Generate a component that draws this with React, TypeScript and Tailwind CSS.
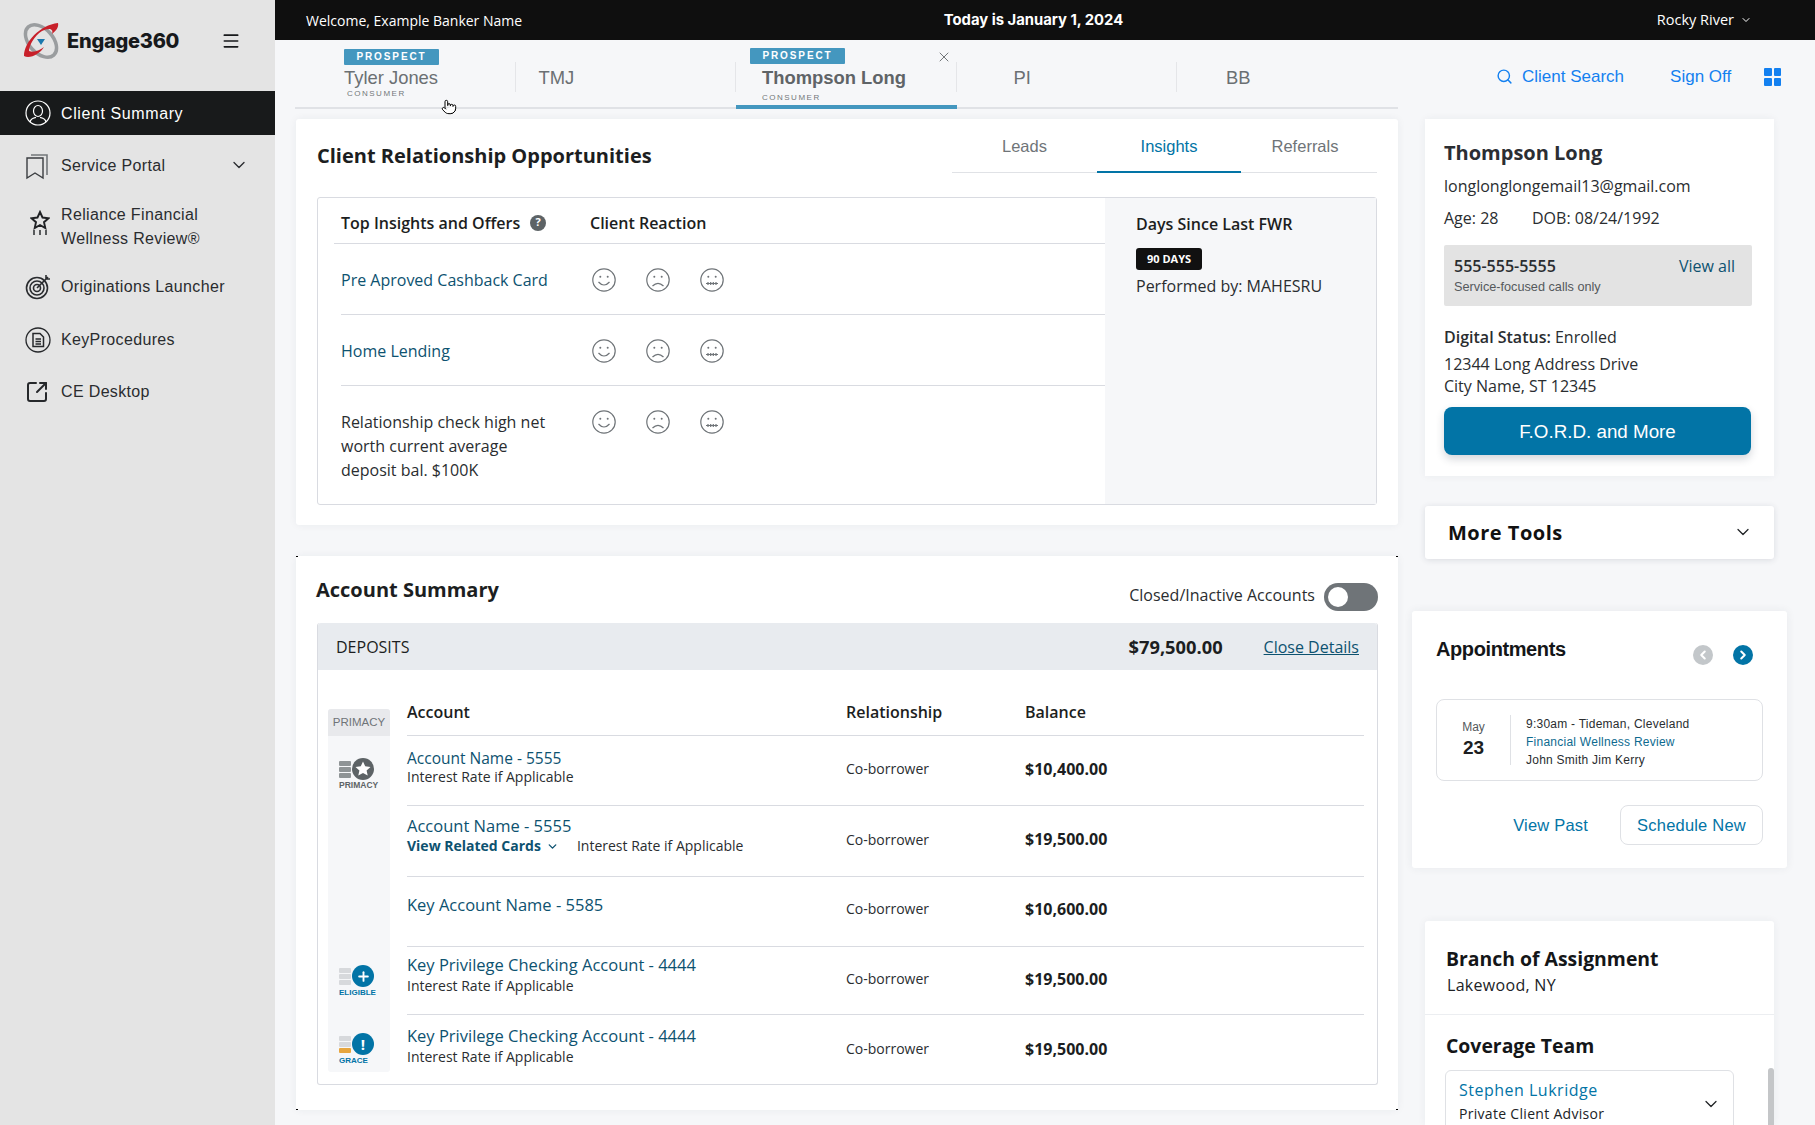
import React from 'react';
import { ChevronDown, ChevronLeft, ChevronRight, Menu, Plus, Pointer, Search, SquareArrowOutUpRight, X } from 'lucide-react';

const Logo = () => (
  <svg width="38" height="38" viewBox="0 0 38 38" fill="none">
    <ellipse cx="19" cy="19" rx="19" ry="12" transform="rotate(48 19 19)" stroke="#9a9d9f" strokeWidth="3.5" />
    <path d="M2 34 C2 20 18 3 36 1 C37 5 34 9 30 12 C32 6 26 6 20 9 C12 14 7 24 7 29 C12 31 18 28 22 25 C18 32 8 37 2 34Z" fill="#c8202a" />
    <path d="M15 17 L23 17 L19 23Z" fill="#1b78ad" />
  </svg>
);

const UserIcon = () => (
  <svg width="26" height="26" viewBox="0 0 26 26" fill="none" stroke="#fff" strokeWidth="1.2">
    <circle cx="13" cy="13" r="12" />
    <ellipse cx="13" cy="11" rx="4.5" ry="5.5" />
    <path d="M5 22 C6 18 9 18 11 17.5 M21 22 C20 18 17 18 15 17.5" />
  </svg>
);

const PortalIcon = () => (
  <svg width="24" height="27" viewBox="0 0 24 27" fill="none" stroke="#3a3d40" strokeWidth="1.4">
    <path d="M2 5 H18 V25 L10 20 L2 25Z" />
    <path d="M6 2 H22 V22" stroke="#73777a" strokeWidth="1.6" />
  </svg>
);

const StarIcon = () => (
  <svg width="20" height="26" viewBox="0 0 20 26" fill="none" stroke="#1f2124" strokeWidth="1.9">
    <path d="M10 2 L12.5 7.5 L18.5 8.2 L14 12.2 L15.3 18 L10 15 L4.7 18 L6 12.2 L1.5 8.2 L7.5 7.5Z" />
    <path d="M4 20 V25 M10 20 V25 M16 20 V25" strokeWidth="1.4" />
  </svg>
);

const TargetIcon = () => (
  <svg width="26" height="26" viewBox="0 0 26 26" fill="none" stroke="#2a2c2f" strokeWidth="1.6">
    <circle cx="12" cy="14" r="10.5" />
    <circle cx="12" cy="14" r="7" />
    <circle cx="12" cy="14" r="3.5" />
    <path d="M12 14 L23 3 M21 1 L21 5 L25 5" />
  </svg>
);

const DocIcon = () => (
  <svg width="26" height="26" viewBox="0 0 26 26" fill="none" stroke="#26282b" strokeWidth="1.3">
    <circle cx="13" cy="13" r="12" />
    <path d="M8 6.5 H15 L18.5 10 V19.5 H8Z" strokeWidth="1.5" />
    <path d="M10.5 12 H16 M10.5 14.5 H16 M10.5 17 H16" />
  </svg>
);

const Face = ({ mouth }: { mouth: string }) => (
  <svg width="24" height="24" viewBox="0 0 24 24" fill="none" stroke="#6f7478" strokeWidth="1.2">
    <circle cx="12" cy="12" r="11.2" />
    <circle cx="8.3" cy="8.8" r="1" fill="#6f7478" stroke="none" />
    <circle cx="15.7" cy="8.8" r="1" fill="#6f7478" stroke="none" />
    <path d={mouth} />
  </svg>
);

const faces = [
  'M6.5 14 Q12 20 17.5 14',
  'M6.5 18 Q12 12.5 17.5 18',
  'M6 15.5 H18 M8 14 V17 M10.7 14 V17 M13.3 14 V17 M16 14 V17',
];

const Stripes = ({ colors }: { colors: string[] }) => (
  <div className="flex flex-col gap-[1px] w-[12px]">
    {colors.map((c, i) => (
      <div key={i} className={`h-[5px] rounded-[1px] ${c}`} />
    ))}
  </div>
);

const StatusBadge = ({ kind }: { kind: string }) => {
  if (kind === 'primacy') {
    return (
      <div className="ml-[11px]">
        <div className="flex items-center gap-[1px]">
          <Stripes colors={['bg-[#8f9496]', 'bg-[#8f9496]', 'bg-[#8f9496]']} />
          <svg width="22" height="22" viewBox="0 0 22 22">
            <circle cx="11" cy="11" r="11" fill="#5d6366" />
            <path d="M11 3.5 L13.2 8.3 L18.5 8.9 L14.6 12.4 L15.7 17.6 L11 15 L6.3 17.6 L7.4 12.4 L3.5 8.9 L8.8 8.3Z" fill="#fff" />
          </svg>
        </div>
        <div className="text-[8.5px] leading-[10px] font-bold text-[#5d6366] font-['Liberation_Sans',sans-serif]">PRIMACY</div>
      </div>
    );
  }
  const isGrace = kind === 'grace';
  return (
    <div className="ml-[11px]">
      <div className="flex items-center gap-[1px]">
        <Stripes colors={isGrace ? ['bg-[#d7d9dc]', 'bg-[#d7d9dc]', 'bg-[#e7a63f]'] : ['bg-[#d7d9dc]', 'bg-[#d7d9dc]', 'bg-[#d7d9dc]']} />
        <div className="w-[22px] h-[22px] rounded-full bg-[#0274a6] flex items-center justify-center text-white">
          {isGrace ? <span className="text-[15px] leading-none font-bold">!</span> : <Plus size={15} strokeWidth={3} />}
        </div>
      </div>
      <div className="mt-[1px] text-[8px] leading-[10px] font-bold text-[#0274a6] font-['Liberation_Sans',sans-serif]">{isGrace ? 'GRACE' : 'ELIGIBLE'}</div>
    </div>
  );
};

const NavItem = ({ icon, children, className }: { icon: React.ReactNode; children: React.ReactNode; className: string }) => (
  <div className={`flex items-center pl-[25px] text-[#2a2c2f] ${className}`}>
    <div className="w-[36px] flex shrink-0">{icon}</div>
    <div>{children}</div>
  </div>
);

const insightRows = [
  { label: 'Pre Aproved Cashback Card', link: true, h: 'h-[71px]' },
  { label: 'Home Lending', link: true, h: 'h-[71px]' },
  { label: 'Relationship check high net worth current average deposit bal. $100K', link: false, h: 'h-[119px]' },
];

const accounts = [
  { h: 'h-[70px]', pt: 'pt-[12px]', subMt: 'mt-0', balPb: 'pb-[4px]', name: 'Account Name - 5555', nameCls: 'text-[15.5px] font-normal', sub: 'Interest Rate if Applicable', bal: '$10,400.00', badge: 'primacy', badgePt: 'pt-[22px]' },
  { h: 'h-[71px]', pt: 'pt-[10px]', subMt: 'mt-[1px]', balPb: 'pb-[4px]', name: 'Account Name - 5555', nameCls: 'text-[16.5px] font-medium', related: true, sub: 'Interest Rate if Applicable', bal: '$19,500.00', badge: '', badgePt: '' },
  { h: 'h-[70px]', pt: 'pt-[18px]', subMt: 'mt-0', balPb: 'pb-[6px]', name: 'Key Account Name - 5585', nameCls: 'text-[16.5px] font-medium', sub: '', bal: '$10,600.00', badge: '', badgePt: '' },
  { h: 'h-[68px]', pt: 'pt-[8px]', subMt: 'mt-[2px]', balPb: 'pb-[4px]', name: 'Key Privilege Checking Account - 4444', nameCls: 'text-[16.5px] font-medium', sub: 'Interest Rate if Applicable', bal: '$19,500.00', badge: 'eligible', badgePt: 'pt-[18px]' },
  { h: 'h-[71px]', pt: 'pt-[11px]', subMt: 'mt-[2px]', balPb: 'pb-[4px]', name: 'Key Privilege Checking Account - 4444', nameCls: 'text-[16.5px] font-medium', sub: 'Interest Rate if Applicable', bal: '$19,500.00', badge: 'grace', badgePt: 'pt-[18px]' },
];

const clientTabs = [
  { label: 'Tyler Jones', short: false },
  { label: 'TMJ', short: true },
  { label: 'Thompson Long', short: false, active: true },
  { label: 'PI', short: true },
  { label: 'BB', short: true },
];

const insightTabs = [
  { label: 'Leads', w: 'w-[145px]', extra: '' },
  { label: 'Insights', w: 'w-[144px]', extra: '' },
  { label: 'Referrals', w: 'w-[136px]', extra: 'pr-[8px]' },
];

export default function App() {
  return (
    <div className="flex w-[1815px] h-[1125px] overflow-hidden bg-[#f6f7f9] font-['Open_Sans',sans-serif] text-[#202326]">
      {/* sidebar */}
      <aside className="w-[275px] shrink-0 bg-[#e4e4e4] font-['Liberation_Sans',sans-serif] text-[16px] tracking-[0.35px]">
        <div className="h-[91px] flex items-center pl-[22px] pb-[9px]">
          <Logo />
          <span className="ml-[7px] text-[20px] font-extrabold tracking-[-0.25px] text-[#17191b] font-['Inter',sans-serif]">Engage360</span>
          <Menu size={20} className="ml-[42px] text-[#17191b]" />
        </div>
        <div className="h-[44px] bg-[#181a1b] text-white flex items-center pl-[25px]">
          <div className="w-[36px] flex shrink-0"><UserIcon /></div>
          <span className="pt-[2px] tracking-[0.6px]">Client Summary</span>
        </div>
        <div className="relative">
          <NavItem icon={<PortalIcon />} className="h-[52px] pt-[10px]">Service Portal</NavItem>
          <ChevronDown size={20} strokeWidth={1.6} className="absolute right-[26px] top-[20px] text-[#2a2c2f]" />
        </div>
        <NavItem icon={<div className="pl-[5px] pb-[8px]"><StarIcon /></div>} className="h-[48px] mt-[16px] leading-[24px]">
          Reliance Financial<br />Wellness Review®
        </NavItem>
        <NavItem icon={<TargetIcon />} className="h-[26px] mt-[23px]">Originations Launcher</NavItem>
        <NavItem icon={<DocIcon />} className="h-[26px] mt-[27px]">KeyProcedures</NavItem>
        <NavItem icon={<SquareArrowOutUpRight size={24} strokeWidth={2} className="text-[#26282b]" />} className="h-[26px] mt-[26px]">CE Desktop</NavItem>
      </aside>

      <div className="flex-1 min-w-0 flex flex-col relative">
        {/* top bar */}
        <header className="h-[40px] shrink-0 bg-[#0f0f0f] text-white flex items-center justify-between pl-[31px] pr-[63px] text-[14px]">
          <span className="w-[300px]">Welcome, Example Banker Name</span>
          <span className="font-bold text-[14.8px] font-['Inter',sans-serif] ml-[9px]">Today is January 1, 2024</span>
          <span className="w-[300px] flex items-center justify-end gap-[6px] text-[14.5px]">
            Rocky River <ChevronDown size={12} />
          </span>
        </header>

        {/* client tabs */}
        <div className="h-[69px] shrink-0 flex font-['Liberation_Sans',sans-serif]">
          <div className="ml-[20px] w-[1103px] flex border-b-2 border-[#e0e2e6]">
            {clientTabs.map((t, i) => (
              <div key={t.label} className={`relative w-[220.5px] h-[67px] ${i < 4 ? 'after:absolute after:right-0 after:top-[22px] after:h-[30px] after:w-px after:bg-[#e5e6e9]' : ''}`}>
                {t.short && (
                  <span className={`absolute top-[28px] text-[18.4px] leading-[20px] text-[#6b7073] ${i === 1 ? 'left-[23px]' : i === 3 ? 'left-[57px]' : 'left-[49px]'}`}>{t.label}</span>
                )}
                {!t.short && (
                  <>
                    <span className={`absolute bg-[#4497bf] text-white text-[10px] leading-[16px] font-bold tracking-[1.9px] h-[16px] w-[95px] text-center rounded-[1px] ${t.active ? 'left-[14px] top-[8px]' : 'left-[49px] top-[9px]'}`}>PROSPECT</span>
                    <span className={`absolute top-[28px] text-[18.4px] leading-[20px] whitespace-nowrap ${t.active ? 'left-[26px] font-bold text-[#5f6467]' : 'left-[49px] text-[#6b7073]'}`}>{t.label}</span>
                    <span className={`absolute text-[8px] leading-[10px] tracking-[1.5px] text-[#73777a] ${t.active ? 'left-[26px] top-[53px]' : 'left-[52px] top-[49px]'}`}>CONSUMER</span>
                  </>
                )}
                {t.active && (
                  <>
                    <X size={16} strokeWidth={1.5} className="absolute left-[200px] top-[9px] text-[#73777a]" />
                    <div className="absolute left-0 right-0 bottom-[-2px] h-[4px] bg-[#4497bf]" />
                  </>
                )}
              </div>
            ))}
          </div>
          <div className="flex items-start pt-[27px] ml-[98px] text-[17px] text-[#1380f0]">
            <Search size={17} strokeWidth={2} className="mt-[1px] mr-[9px]" />
            <span className="leading-[20px]">Client Search</span>
            <span className="ml-[46px] leading-[20px]">Sign Off</span>
            <div className="ml-[33px] grid grid-cols-2 gap-[2px] w-[17px] mt-[1px]">
              <div className="h-[8px] bg-[#1380f0] rounded-[1px]" />
              <div className="h-[8px] bg-[#1380f0] rounded-[1px]" />
              <div className="h-[8px] bg-[#1380f0] rounded-[1px]" />
              <div className="h-[8px] bg-[#1380f0] rounded-[1px]" />
            </div>
          </div>
        </div>

        <Pointer size={16} strokeWidth={1.5} className="absolute left-[166px] top-[99px] text-black fill-white" />

        <div className="flex flex-1 min-h-0 pt-[10px]">
          {/* main column */}
          <main className="ml-[21px] w-[1102px] shrink-0 flex flex-col gap-[31px]">
            <section className="h-[406px] bg-white rounded-[3px] shadow-[0_0_8px_rgba(40,50,70,0.06)] pl-[21px] pr-[21px] pt-[8px]">
              <div className="flex justify-between h-[70px]">
                <h2 className="text-[20px] leading-[28px] font-bold pt-[15px] text-[#1c1e21]">Client Relationship Opportunities</h2>
                <div className="flex h-[46px] border-b border-[#e0e2e6] text-[16.5px] font-['Liberation_Sans',sans-serif] text-[#6f7478]">
                  {insightTabs.map(t => (
                    <div key={t.label} className={`${t.w} ${t.extra} pt-[7px] text-center ${t.label === 'Insights' ? 'text-[#0274a6] border-b-2 border-[#0274a6] h-[46px]' : ''}`}>{t.label}</div>
                  ))}
                </div>
              </div>
              <div className="flex h-[308px] border border-[#d9dbe1] rounded-[3px]">
                <div className="w-[787px] shrink-0 pl-[16px] text-[16px]">
                  <div className="h-[46px] flex items-center border-b border-[#d9dbe1] font-semibold pt-[4px]">
                    <div className="pl-[7px] w-[256px] flex items-center gap-[10px] text-[#1c1e21]">
                      Top Insights and Offers
                      <span className="w-[16px] h-[16px] rounded-full bg-[#5d6366] text-white text-[11px] font-bold flex items-center justify-center">?</span>
                    </div>
                    <span className="text-[#1c1e21]">Client Reaction</span>
                  </div>
                  <div className="ml-[7px]">
                    {insightRows.map((r, i) => (
                      <div key={r.label} className={`flex ${r.h} ${i < 2 ? 'border-b border-[#d9dbe1] items-center pt-[2px]' : ''}`}>
                        <div className={`w-[251px] pr-[36px] leading-[24px] ${r.link ? 'text-[#0d5270]' : 'text-[#2a2d30] pt-[24px]'}`}>{r.label}</div>
                        <div className={`flex gap-[30px] h-[24px] ${r.link ? '' : 'mt-[24px]'}`}>
                          {faces.map(m => <Face key={m} mouth={m} />)}
                        </div>
                      </div>
                    ))}
                  </div>
                </div>
                <div className="flex-1 bg-[#f6f7f9] pl-[31px] pt-[14px] text-[16px]">
                  <div className="font-semibold leading-[24px] text-[#1c1e21]">Days Since Last FWR</div>
                  <span className="mt-[12px] inline-block bg-[#111] text-white text-[11px] font-bold leading-[22px] h-[22px] px-[11px] rounded-[3px]">90 DAYS</span>
                  <div className="leading-[24px] text-[#2a2d30] mt-[4px]">Performed by: MAHESRU</div>
                </div>
              </div>
            </section>

            <section className="relative h-[554px] bg-white rounded-[3px] shadow-[0_0_8px_rgba(40,50,70,0.06)] pl-[21px] pr-[20px]">
              <div className="absolute left-0 top-0 w-[2px] h-[1px] bg-black" />
              <div className="absolute right-0 top-0 w-[2px] h-[1px] bg-black" />
              <div className="absolute left-0 bottom-0 w-[2px] h-[1px] bg-black" />
              <div className="absolute right-0 bottom-0 w-[2px] h-[1px] bg-black" />
              <div className="flex justify-between h-[67px]">
                <h2 className="text-[20px] leading-[28px] font-bold pt-[20px] -ml-[1px] text-[#1c1e21]">Account Summary</h2>
                <div className="flex items-start pt-[27px] text-[16px] gap-[9px]">
                  <span className="leading-[28px] mt-[-2px] text-[#2a2d30]">Closed/Inactive Accounts</span>
                  <div className="w-[54px] h-[28px] rounded-full bg-[#6f7478] p-[4px]">
                    <div className="w-[20px] h-[20px] rounded-full bg-white" />
                  </div>
                </div>
              </div>
              <div className="h-[462px] border border-[#d9dbe1] border-t-0 rounded-[3px] flex flex-col">
                <div className="h-[47px] shrink-0 bg-[#e8ebef] rounded-t-[3px] flex items-center pl-[18px] pr-[18px] text-[16px]">
                  <span className="font-medium text-[#1c1e21]">DEPOSITS</span>
                  <span className="ml-auto text-[18.3px] font-bold text-[#1c1e21]">$79,500.00</span>
                  <span className="ml-[41px] underline text-[#0d5270]">Close Details</span>
                </div>
                <div className="flex pl-[10px] pr-[13px] pt-[39px]">
                  <div className="w-[62px] h-[363px] shrink-0 bg-[#f6f7f9] rounded-[3px]">
                    <div className="h-[27px] bg-[#e8e9ec] rounded-t-[3px] text-[11.5px] leading-[27px] text-center text-[#6f7478] font-['Liberation_Sans',sans-serif]">PRIMACY</div>
                    {accounts.map((a, i) => (
                      <div key={i} className={`${i === 4 ? 'h-[58px]' : a.h} ${a.badgePt}`}>
                        {a.badge && <StatusBadge kind={a.badge} />}
                      </div>
                    ))}
                  </div>
                  <div className="flex-1 ml-[17px] text-[#2a2d30]">
                    <div className="h-[28px] flex items-start border-b border-[#d9dbe1] text-[16px] font-semibold text-[#1c1e21] -mt-[1px]">
                      <div className="w-[439px] leading-[8px]">Account</div>
                      <div className="w-[179px] leading-[8px]">Relationship</div>
                      <div className="leading-[8px]">Balance</div>
                    </div>
                    {accounts.map((a, i) => (
                      <div key={i} className={`flex ${a.h} ${i < 4 ? 'border-b border-[#d9dbe1]' : ''}`}>
                        <div className={`w-[439px] ${a.pt}`}>
                          <div className={`leading-[20px] text-[#0d5270] ${a.nameCls}`}>{a.name}</div>
                          {a.sub && (
                            <div className={`text-[14px] leading-[18px] flex ${a.subMt}`}>
                              {a.related && (
                                <span className="font-bold text-[#0d5270] flex items-center gap-[5px] mr-[18px]">
                                  View Related Cards <ChevronDown size={13} strokeWidth={2.5} />
                                </span>
                              )}
                              {a.sub}
                            </div>
                          )}
                        </div>
                        <div className={`w-[179px] text-[14px] flex items-center ${a.balPb}`}>Co-borrower</div>
                        <div className={`text-[16px] font-bold text-[#1c1e21] flex items-center ${a.balPb}`}>{a.bal}</div>
                      </div>
                    ))}
                  </div>
                </div>
              </div>
            </section>
          </main>

          {/* right column */}
          <div className="ml-[14px] w-[375px] shrink-0 flex flex-col">
            <section className="mx-[13px] h-[357px] bg-white shadow-[0_0_8px_rgba(40,50,70,0.06)] px-[19px] pt-[20px] text-[16px] text-[#2a2d30]">
              <h3 className="text-[20px] leading-[28px] font-bold text-[#2b2e33]">Thompson Long</h3>
              <div className="leading-[24px] mt-[7px]">longlonglongemail13@gmail.com</div>
              <div className="leading-[24px] mt-[8px] flex">
                <span className="w-[88px]">Age: 28</span>
                <span>DOB: 08/24/1992</span>
              </div>
              <div className="w-[308px] h-[61px] mt-[15px] bg-[#e3e3e3] rounded-[2px] pl-[10px] pr-[17px] pt-[9px] flex justify-between">
                <div>
                  <div className="font-semibold leading-[24px]">555-555-5555</div>
                  <div className="text-[12.7px] leading-[16px] mt-[1px] text-[#55595c] font-['Liberation_Sans',sans-serif]">Service-focused calls only</div>
                </div>
                <span className="text-[#0d5270] leading-[24px]">View all</span>
              </div>
              <div className="leading-[22px] mt-[20px]"><b className="font-semibold">Digital Status:</b> Enrolled</div>
              <div className="leading-[22px] mt-[5px]">12344 Long Address Drive<br />City Name, ST 12345</div>
              <button className="block w-[307px] h-[48px] mt-[10px] pt-[2px] rounded-[8px] bg-[#0274a6] text-white text-[18.8px] font-['Liberation_Sans',sans-serif] shadow-[0_4px_8px_rgba(40,50,70,0.2)]">
                F.O.R.D. and More
              </button>
            </section>

            <section className="mx-[13px] mt-[30px] h-[53px] bg-white rounded-[3px] shadow-[0_1px_6px_rgba(40,50,70,0.14)] pl-[23px] pr-[21px] flex items-center justify-between">
              <h3 className="text-[20px] font-bold tracking-[0.5px] text-[#111]">More Tools</h3>
              <ChevronDown size={20} strokeWidth={1.5} className="mb-[2px]" />
            </section>

            <section className="mt-[52px] h-[257px] bg-white rounded-[3px] shadow-[0_0_10px_rgba(40,50,70,0.07)] pl-[24px] pr-[24px] pt-[23px] font-['Liberation_Sans',sans-serif]">
              <div className="flex justify-between h-[65px]">
                <h3 className="text-[20px] leading-[30px] font-bold text-[#141618] tracking-[-0.4px]">Appointments</h3>
                <div className="flex gap-[20px] pt-[11px] pr-[10px]">
                  <div className="w-[20px] h-[20px] rounded-full bg-[#c3c7ca] flex items-center justify-center text-white"><ChevronLeft size={14} strokeWidth={3.5} /></div>
                  <div className="w-[20px] h-[20px] rounded-full bg-[#0274a6] flex items-center justify-center text-white"><ChevronRight size={14} strokeWidth={3.5} /></div>
                </div>
              </div>
              <div className="h-[82px] border border-[#dfe1e5] rounded-[8px] flex items-center pl-[16px]">
                <div className="w-[57px] shrink-0 pr-[16px] text-center pb-[2px]">
                  <div className="text-[12px] leading-[18px] text-[#55595c]">May</div>
                  <div className="text-[19px] leading-[24px] font-bold text-[#1c1e21]">23</div>
                </div>
                <div className="w-px h-[50px] bg-[#dfe1e5]" />
                <div className="pl-[15px] pt-[3px] text-[12px] leading-[18px] text-[#2a2d30] tracking-[0.25px]">
                  <div>9:30am - Tideman, Cleveland</div>
                  <div className="text-[#0d6a8f]">Financial Wellness Review</div>
                  <div>John Smith Jim Kerry</div>
                </div>
              </div>
              <div className="flex items-center justify-end mt-[24px] text-[16.5px] text-[#0274a6] tracking-[0.2px]">
                <span>View Past</span>
                <span className="ml-[32px] w-[143px] h-[40px] leading-[38px] text-center border border-[#dfe1e5] rounded-[8px]">Schedule New</span>
              </div>
            </section>

            <section className="relative mx-[13px] mt-[53px] flex-1 bg-white rounded-t-[3px] shadow-[0_0_8px_rgba(40,50,70,0.06)] overflow-hidden">
              <div className="h-[94px] border-b border-[#eceef1] pl-[21px] pt-[23px]">
                <h3 className="text-[19.4px] leading-[30px] font-bold text-[#141618]">Branch of Assignment</h3>
                <div className="text-[16px] leading-[22px] tracking-[0.3px] ml-[1px]">Lakewood, NY</div>
              </div>
              <div className="pl-[20px] pt-[16px]">
                <h3 className="text-[19.4px] leading-[30px] font-bold text-[#141618] ml-[1px]">Coverage Team</h3>
                <div className="mt-[9px] w-[289px] h-[80px] border border-[#dfe1e5] rounded-[6px] pl-[13px] pt-[8px] relative">
                  <div className="text-[16px] leading-[22px] text-[#0274a6] tracking-[0.5px]">Stephen Lukridge</div>
                  <div className="text-[14px] leading-[25px] tracking-[0.3px]">Private Client Advisor</div>
                  <ChevronDown size={20} strokeWidth={1.5} className="absolute right-[12px] top-[23px]" />
                </div>
              </div>
              <div className="absolute right-0 top-[147px] w-[6px] h-[90px] rounded-full bg-[#c4c6c8]" />
            </section>
          </div>
        </div>
      </div>
    </div>
  );
}
